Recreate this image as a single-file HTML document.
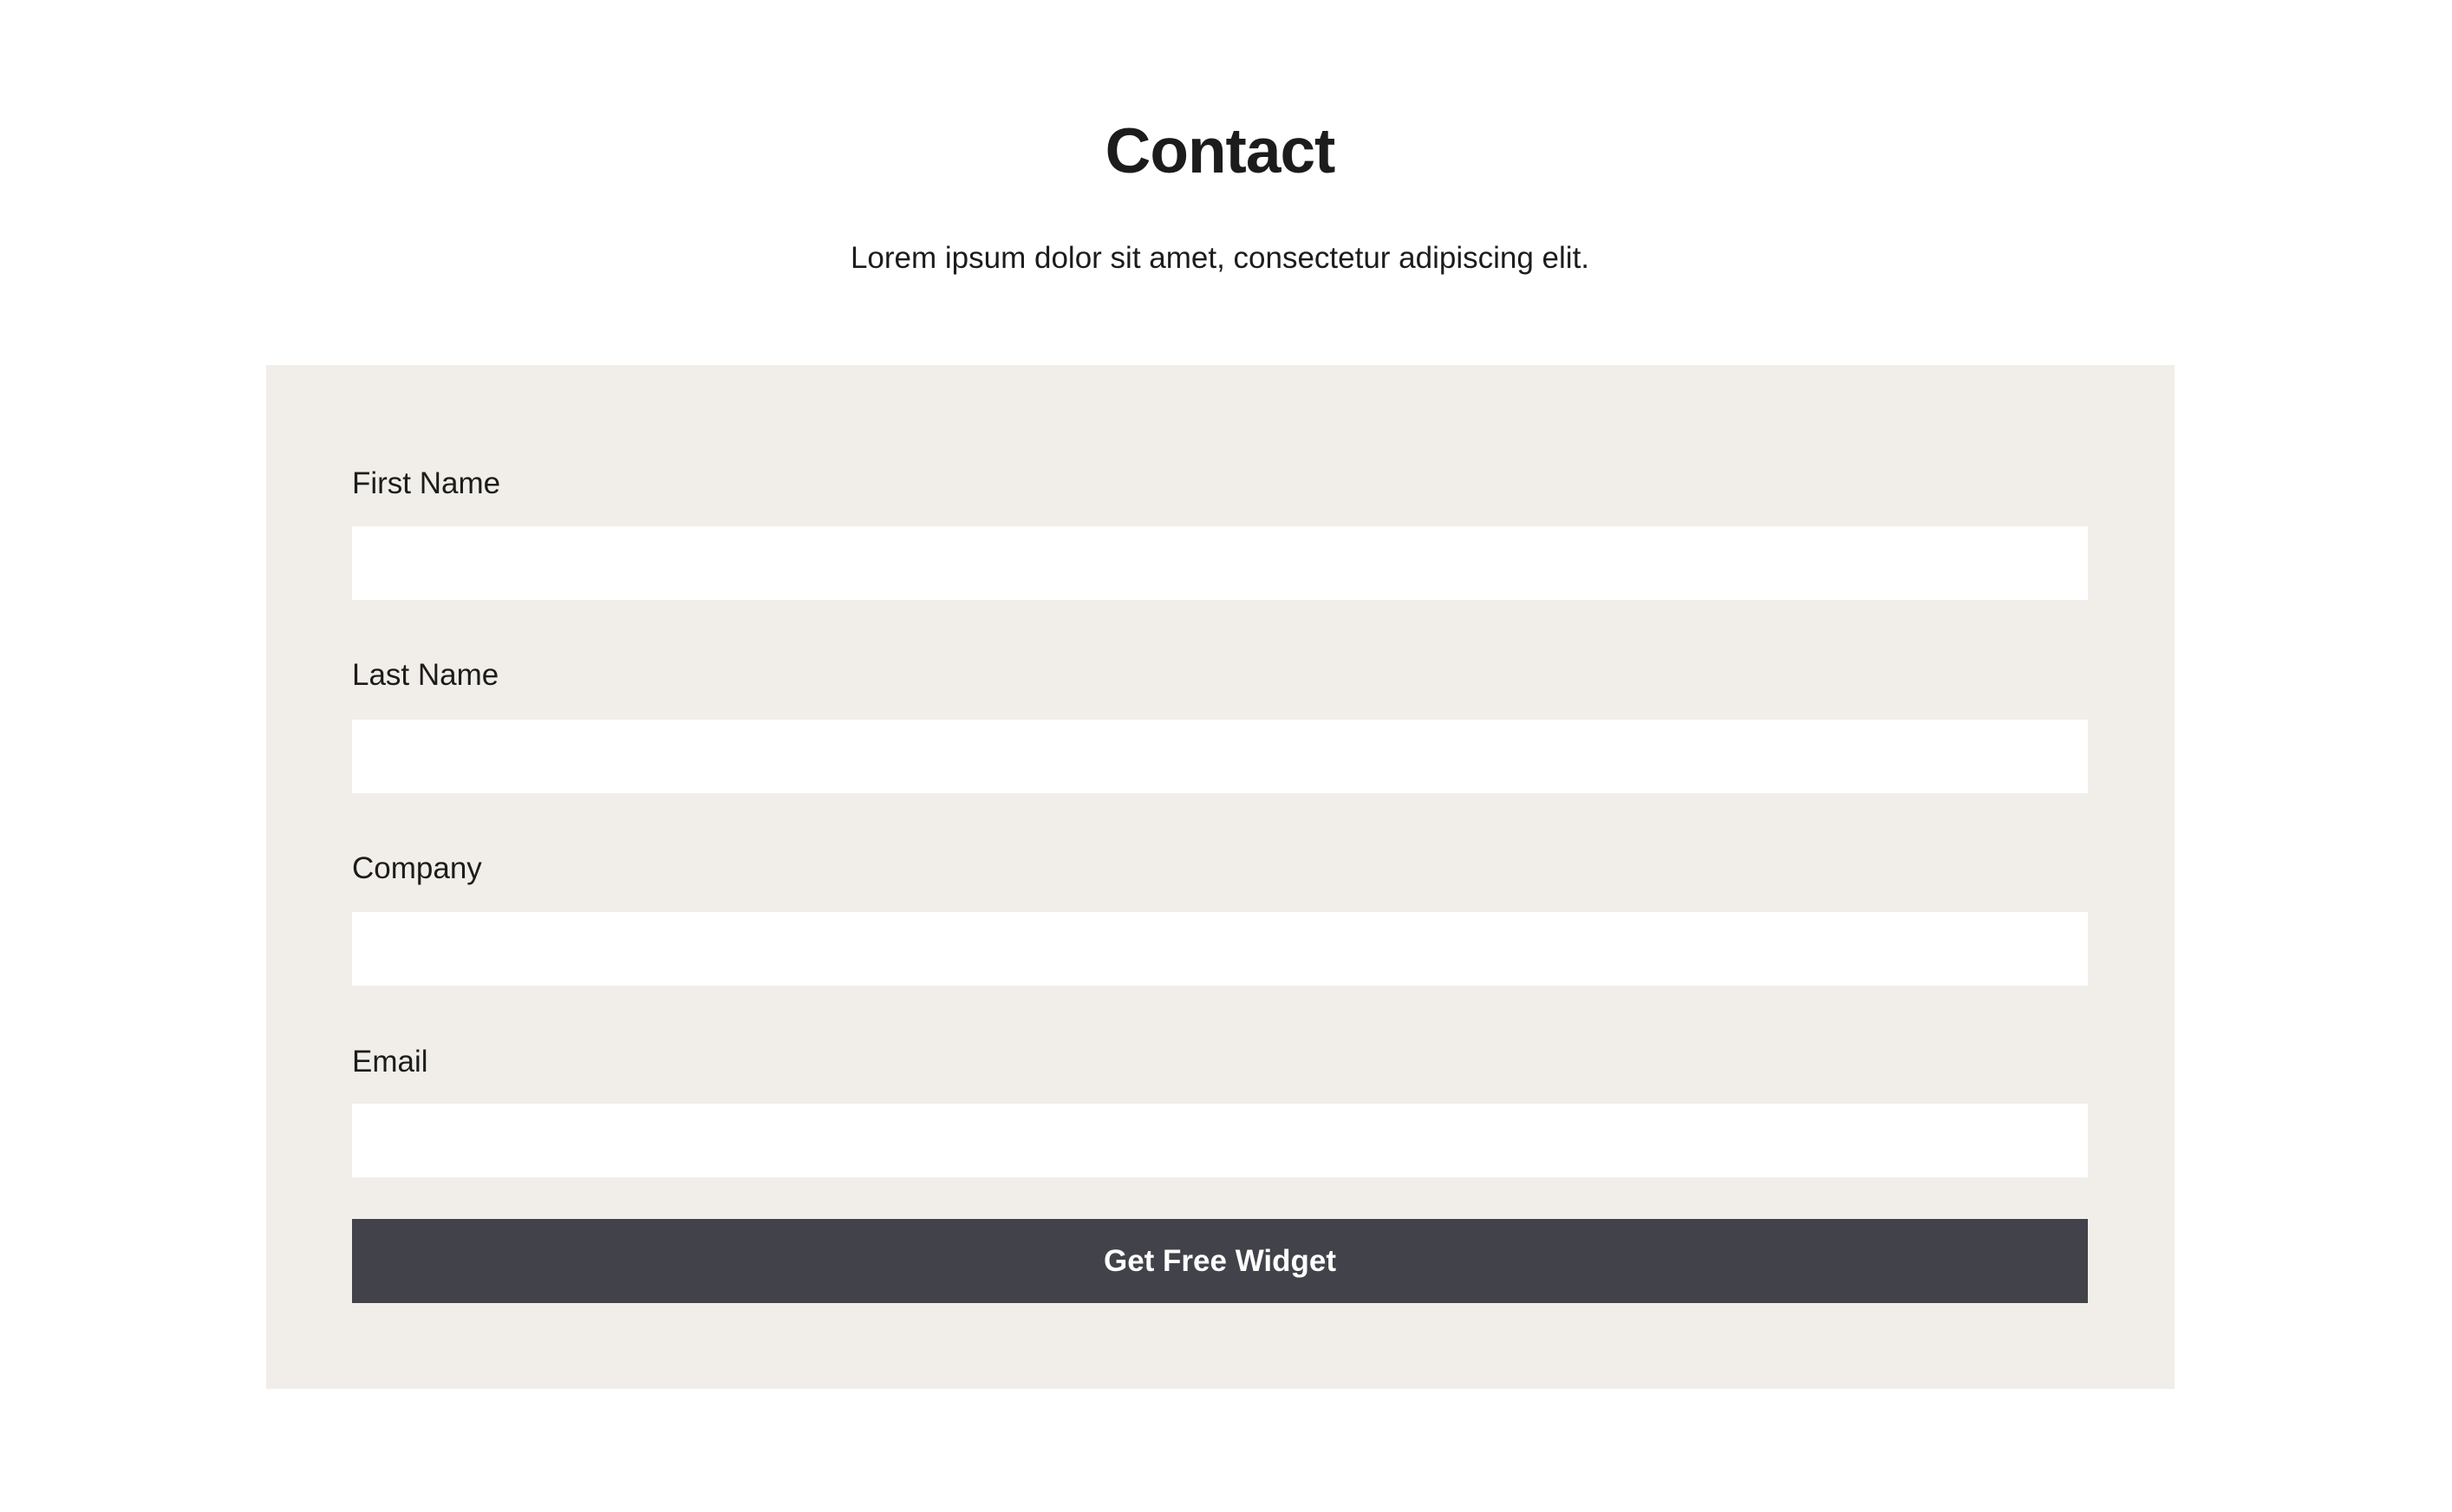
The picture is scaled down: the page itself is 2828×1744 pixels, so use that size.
<!DOCTYPE html>
<html><head><meta charset="utf-8"><style>
body{margin:0;width:2828px;height:1744px;background:#fff;font-family:"Liberation Sans",Arial,sans-serif;color:#1c1c1c;position:relative;overflow:hidden}
.a{position:absolute}
h1{position:absolute;margin:0;left:0;width:2814px;text-align:center;top:133px;font-size:73px;line-height:84px;font-weight:bold;letter-spacing:-1px}
.sub{left:0;width:2814px;text-align:center;top:278px;font-size:35px;line-height:40px}
.panel{left:307px;top:421px;width:2201px;height:1181px;background:#f1eee9}
.lbl{left:406px;font-size:35px;line-height:40px}
.in{left:406px;width:2002px;height:85px;background:#fff}
.btn{left:406px;top:1406px;width:2002px;height:97px;background:#42424a;color:#fff;font-weight:bold;font-size:35px;line-height:97px;text-align:center}
</style></head><body>
<h1>Contact</h1>
<div class="a sub">Lorem ipsum dolor sit amet, consectetur adipiscing elit.</div>
<div class="a panel"></div>
<div class="a lbl" style="top:538px">First Name</div>
<div class="a in" style="top:607px"></div>
<div class="a lbl" style="top:759px">Last Name</div>
<div class="a in" style="top:830px"></div>
<div class="a lbl" style="top:982px">Company</div>
<div class="a in" style="top:1052px"></div>
<div class="a lbl" style="top:1205px">Email</div>
<div class="a in" style="top:1273px"></div>
<div class="a btn">Get Free Widget</div>
</body></html>
